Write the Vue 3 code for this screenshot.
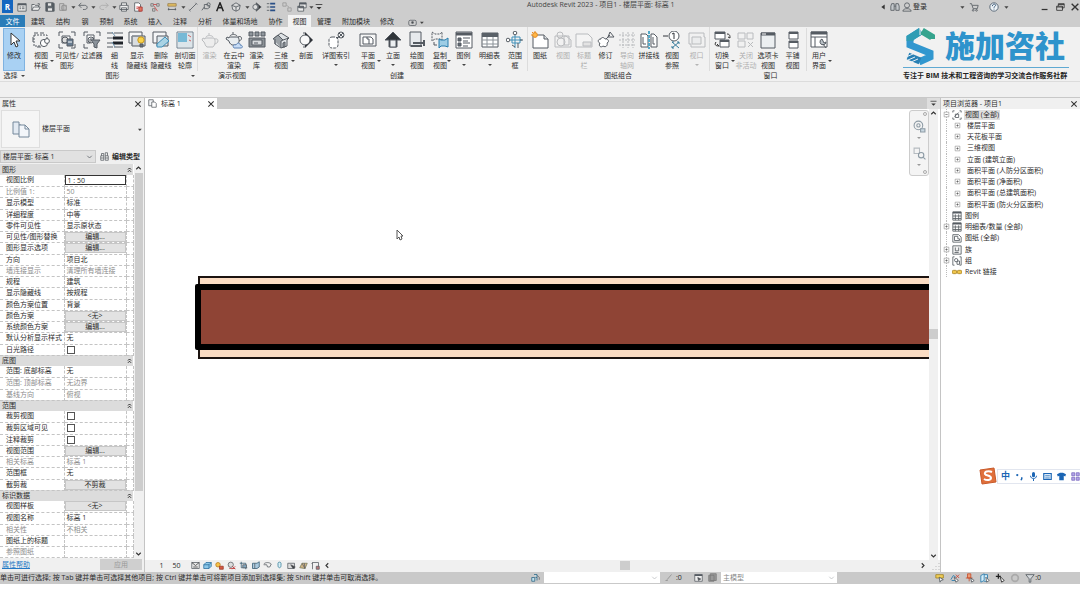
<script setup>
import { h, ref } from 'vue'

const K = '#555b62'
const B = '#3f8fb8'

const large = {
  thumb: `<path d="M1 2h6v3h2v9H1z" fill="#e3eaf2" stroke="#75889b"/><path d="M7 5h6l4 4v8H7z" fill="#f3f6fa" stroke="#75889b"/><path d="M13 5v4h4" stroke="#75889b"/>`,
  cursor: `<path d="M6 2v12l3-3 2 5 2-1-2-5h4z" fill="#fff" stroke="#333"/>`,
  template: `<path d="M2 4h13v5M2 4v11h6" stroke-dasharray="2 1"/><path d="M2 2h4M8 2h4M1 6v5" /><circle cx="12" cy="12" r="3.6" fill="#fff"/><circle cx="15" cy="10" r="2.4" fill="#fff"/><path d="M5 16h4"/>`,
  visibility: `<path d="M1 5V1h4M13 1h4v4M1 13v4h4M13 17h4v-4"/><path d="M4 5h8v7H4z" fill="#fff"/><circle cx="7" cy="9" r="3" fill="#ddd"/><path d="M9 8h6v7H9z" fill="#687c90"/><path d="M10 11h4" stroke="#fff"/>`,
  filter: `<path d="M1 5V1h4M13 1h4v4M1 13v4h4"/><path d="M4 4h7v4H7v4H4z" fill="#fff"/><circle cx="8" cy="9" r="3" /><path d="M8 9h9l-3 4v4l-3-1v-3z" fill="#8b939b"/>`,
  thin: `<path d="M1 2h6M1 7h6M1 12h6M1 16h6" stroke-width="1"/><path d="M8 2h9M8 16h9" stroke-width="1"/><path d="M7 7h10M7 12h10" stroke-width="3" stroke="#20242a"/><path d="M6 1l3 4M6 11l3 5" stroke="#6f93ad"/>`,
  showHidden: `<path d="M1 1h13v11H1z" fill="#f5f6f7"/><path d="M4 5h13v10H4z" fill="#d9dde0"/><path d="M4 15V5h10" stroke="#8a9299"/><circle cx="13" cy="9" r="3.2" fill="#f9d24a" stroke="#c7971f"/><path d="M12 13h3v3h-3z" fill="#69737c"/>`,
  hideHidden: `<path d="M1 1h13v11H1z" fill="#f5f6f7"/><path d="M5 5h11v10H5z" fill="#dfe8ed"/><path d="M5 13L13 6l4 4-7 6H5z" fill="#a9d3e4" stroke="${B}"/>`,
  profile: `<path d="M1 1h16v16H1z" fill="#fff" stroke="#6d7f8d"/><path d="M2 2h9v9H2z" fill="#77b9d6" stroke="none"/><path d="M11 2h5v14H2v-5h9z" fill="#dce5ea" stroke="none"/><path d="M12 4l3 2M13 9l2 1" stroke="#c66"/>`,
  teapot: `<path d="M4 7h9c2 3 1 7-1 9H6c-2-1-2-4-3-5L1 9l1-2 2 1zM5 6c1-2 6-2 7 0M8 4V2M14 8c4-1 4 4 0 5" fill="#e8e8e8"/>`,
  cloudRender: `<path d="M4 6h9c2 3 1 6-1 8H7c-2-1-3-3-3-4L1 8l1-2 2 1z" fill="#e9edf0"/><path d="M5 5c1-2 6-2 7 0M8 3V1M13 6c4-2 5 3 1 4"/><path d="M9 17c-2-2 0-4 2-3 1-3 5-2 4 0 3 0 3 3 1 3z" fill="#c7dcf5" stroke="#5f84b5"/>`,
  gallery: `<path d="M1 1h4v4H1zM7 1h4v4H7zM13 1h4v4h-4z" fill="#8f969c"/><path d="M1 7h16v9H1z" fill="#8c9297"/><path d="M4 9h10v5H4z" fill="#d7dadd"/><path d="M6 12h4"/>`,
  house: `<path d="M1 8l8-6 8 5-2 2v6l-6 2-6-4V8z" fill="#dfe3e6"/><path d="M1 8l5-4 5 5-2 1v7M3 8v5M11 9l6-2M11 12v4h2v-5z" fill="#9ba1a6"/>`,
  section: `<circle cx="8" cy="9" r="5" fill="#f9f9f9"/><path d="M8 1l8 8-8 8v-3a5 5 0 0 0 0-10z" fill="#30343a" stroke="none"/><path d="M7 1v2M7 15v2"/>`,
  callout: `<rect x="2" y="6" width="9" height="11" rx="3" fill="#fff" stroke-dasharray="3 1"/><circle cx="14" cy="4" r="3"/><path d="M12 6l4-4M12 2l4 4M9 7l3-1"/>`,
  plan: `<path d="M1 3h16v12H1z" fill="#f6f6f6"/><path d="M4 6h4v2h2v5H4zM8 6h4l2 2v5h-4" fill="#fff"/>`,
  elevation: `<path d="M9 1l8 8h-4v7H5V9H1z" fill="#30353a"/><path d="M6 9h6v7H6z" fill="#eceff1"/>`,
  drafting: `<path d="M2 1h11v14H2z" fill="#e7eaed"/><path d="M5 12h11M16 9v6M3 15h11" stroke-width="2"/>`,
  duplicate: `<path d="M1 1l3 2h5l2-2v8l-2-1H4l-3 2z" stroke-dasharray="2 1"/><path d="M8 8l2 1h4l3-2v9l-3-1h-4l-2 2z" fill="#9dcde5" stroke="#287dac"/><path d="M3 11v3h3"/>`,
  legend: `<path d="M1 1h16v16H1z" fill="#fff"/><path d="M1 3h16" stroke-width="3"/><path d="M3 7h3v3H3zM3 12h3v3H3z" fill="#626b73"/><path d="M8 7h7M8 10h5M8 12h7M8 15h5"/>`,
  schedule: `<path d="M1 2h16v14H1z" fill="#fff"/><path d="M1 4h16" stroke-width="4" stroke="#5b6269"/><path d="M1 9h16M1 13h16M6 6v10M12 6v10" stroke="#8b9298"/>`,
  scope: `<path d="M9 4v13M4 9h12M6 6h8v6H6z" stroke="${B}"/><circle cx="9" cy="2" r="1.8" fill="#fff"/><circle cx="2" cy="9" r="1.8" fill="#fff"/><path d="M12 12v5M14 9h3M6 14l3 2"/>`,
  sheet: `<path d="M2 4h11l4 4v9H2z" fill="#fff"/><path d="M13 4v4h4" fill="#dfe3e6"/><circle cx="4" cy="4" r="2.4" fill="#ffb848" stroke="#e48b24"/><path d="M4 0v2M0 4h1M1 1l1 1" stroke="#e48b24"/>`,
  placeView: `<path d="M1 5h11l5 4v7H1z"/><circle cx="6" cy="4" r="3"/><circle cx="7" cy="11" r="4"/><path d="M10 5h5v9h-5z"/>`,
  titleBlock: `<path d="M1 3h12l4 4v9H1z" fill="#fafafa"/><path d="M8 11h8v4H8z" fill="#ccc"/>`,
  revision: `<path d="M4 8c-4 0-3 4-1 4-2 3 1 5 3 3 3 2 5-1 4-3 3-1 1-5-2-4-1-2-4-2-4 0z" fill="#fff"/><path d="M9 8l4-4M13 1l4 5h-6z"/>`,
  guide: `<path d="M5 1v16M10 1v16M15 1v16M1 4h16M1 9h16M1 14h16" stroke-dasharray="2 1"/>`,
  matchline: `<path d="M1 3h5l2 2v11H1zM11 3h3l3 3v10h-6z" fill="#fff"/><path d="M9 0v18" stroke="#54a9c8" stroke-width="2" stroke-dasharray="3 1"/><path d="M3 6v7h3M13 6v7h2"/>`,
  viewRef: `<circle cx="11" cy="5" r="5" fill="#fff"/><path d="M0 5h5M9 3l2-1v6" stroke="#30353a"/><path d="M9 11l7 6M16 11l-7 6M9 11h2M14 11h2v2M9 15v2h2" stroke="#397c9c"/>`,
  viewport: `<path d="M1 2h15v4h1v10H3v-3H1z"/><path d="M4 6h9v7H4z" fill="#e1e4e6"/>`,
  switchWin: `<path d="M2 1h10v7H2zM7 9h9v7H7z" fill="#fff"/><path d="M2 2h10M7 10h9" stroke-width="2"/><path d="M14 3c3 0 3 2 3 4l-2-1M3 11c-2 3 0 4 3 4l-2-2" stroke="#333"/>`,
  closeWin: `<path d="M1 2h7v6H1zM10 2h6v6h-6zM1 10h7v6H1zM11 11l5 5M16 11l-5 5"/>`,
  tabView: `<path d="M2 2h14v15H2z" fill="#eceff1"/><path d="M2 3h14" stroke-width="3"/><path d="M3 3h4" stroke="#fff"/>`,
  tile: `<path d="M5 1h9v7H5zM5 10h9v7H5z" fill="#fff"/><path d="M5 2h9M5 11h9" stroke-width="2"/>`,
  ui: `<path d="M1 1h16v15H1z" fill="#fff"/><path d="M1 2h16" stroke-width="3"/><path d="M1 6h16M5 6v10" /><path d="M12 8a3 3 0 1 0 4 3l-2 1-1-2zM13 13l3 4" fill="#b9c0c6"/>`
}

const small = {
  home: `<path d="M1 2h10v9H1z" fill="#e8e8e8"/><path d="M1 3h10" stroke-width="2"/><path d="M3 6h2M6 6h3M3 8h2M6 8h3"/>`,
  open: `<path d="M1 10V3h3l1 1h4v2M1 10l2-4h8l-2 4z" fill="#eee"/><path d="M8 2h2v2"/>`,
  save: `<path d="M1 1h9l1 1v9H1z" fill="#555c63"/><path d="M3 1h5v4H3zM3 7h6v4H3z" fill="#e8e8e8"/>`,
  sync: `<path d="M2 2h5v8H2zM5 4h5v6H5z" stroke="#8b8b8b"/><circle cx="7" cy="7" r="3" stroke="#999"/>`,
  undo: `<path d="M4 1L1 4l3 3M1 4h7c4 0 4 5 0 5H6"/>`,
  redo: `<path d="M8 1l3 3-3 3M11 4H4C0 4 0 9 4 9h2" stroke="#aaa"/>`,
  print: `<path d="M3 4V1h6v3M1 4h10v5H1zM3 7h6v4H3z" fill="#eee"/>`,
  pdf: `<path d="M2 1h5l2 2v8H2z" fill="#fff"/><path d="M4 6h3M4 8h2" stroke="#c33"/><path d="M7 6h4v5H7z" fill="#e1765f" stroke="#a33"/>`,
  measure: `<path d="M1 2h3v3H1zM8 2h3v3H8zM3 8h3v3H3z" stroke="#777"/><path d="M4 3h4M5 5l4 6" stroke="#c44"/>`,
  dim: `<path d="M1 2h10v3H1z" fill="#e3bf62" stroke="#9a8150"/><path d="M1 9h10M2 7v3M10 7v3"/>`,
  line: `<path d="M2 10L10 2M1 9l2 2M9 1l2 2"/>`,
  tag: `<path d="M1 10l3-4M4 3h4l3 3-3 2H4z"/><circle cx="9" cy="3" r="2"/>`,
  text: `<path d="M2 11L6 1l4 10M4 7h4" stroke="#222" stroke-width="1.8"/>`,
  cube: `<path d="M1 4l5-3 5 3-1 5-4 2-4-2zM1 4l5 2 5-2M6 6v5" fill="#ddd"/>`,
  sect: `<path d="M5 1l6 5-6 5V9a3 3 0 0 0 0-6z" fill="#333"/><circle cx="4" cy="6" r="3" fill="#ddd"/>`,
  lines: `<path d="M1 2h3M1 6h3M1 10h3"/><path d="M5 2h6M5 6h6M5 10h6" stroke="#294f87" stroke-width="2"/>`,
  closeInactive: `<path d="M1 1h4v4H1zM7 7h4v4H7zM6 4l2 2" stroke="#999"/>`,
  windows: `<path d="M3 1h8v6H3zM1 5h7v6H1z" fill="#eee"/><path d="M3 2h8M1 6h7" stroke-width="2"/>`,
  more: `<path d="M2 3h8" stroke="#333"/><path d="M3 6h6L6 9z" fill="#333" stroke="none"/>`,
  down: `<path d="M4 5h5L6.500 8z" fill="#444" stroke="none"/>`,
  left: `<path d="M8 3v6L4 6z" fill="#333" stroke="none"/>`,
  chev: `<path d="M3 5l3 3 3-3"/>`,
  chevUp: `<path d="M3 7l3-3 3 3" stroke="#333" stroke-width="1.500"/>`,
  chevDown: `<path d="M3 5l3 3 3-3" stroke="#333" stroke-width="1.500"/>`,
  chevRight: `<path d="M5 3l3 3-3 3" stroke="#333" stroke-width="1.500"/>`,
  chevLeft: `<path d="M7 3L4 6l3 3" stroke="#333" stroke-width="1.500"/>`,
  double: `<path d="M4 6l2-2 2 2M4 9l2-2 2 2" stroke="#222" stroke-width="1.300"/>`,
  close: `<path d="M2 2l8 8M10 2l-8 8" stroke="#333" stroke-width="1.600"/>`,
  min: `<path d="M2 9h7" stroke="#333" stroke-width="1.500"/>`,
  restore: `<path d="M4 5V2h7v5H8M2 5h7v5H2z" stroke="#333"/><path d="M2 6h7M4 3h7" stroke="#333"/>`,
  find: `<path d="M2 2h3v8H1V5zM7 2h3l1 3v5H7zM5 5h2" fill="#c4c8cc"/>`,
  user: `<circle cx="6" cy="4" r="3"/><path d="M1 11c0-4 10-4 10 0z"/>`,
  cart: `<path d="M1 2h2l2 6h5l1-4H4"/><circle cx="5" cy="10" r="1"/><circle cx="9" cy="10" r="1"/>`,
  help: `<circle cx="6" cy="6" r="5" fill="#eef3f7" stroke="#456"/><path d="M4 5c0-3 4-3 4-1 0 1-2 1-2 3M6 8v1" stroke="#246"/>`,
  play: `<rect x="1" y="3" width="10" height="7" rx="2"/><path d="M5 5h2v2H5z" fill="#444"/>`,
  pages: `<path d="M1 1h6v8H1z" fill="#f4f6f8"/><path d="M5 4h4l2 2v5H5z" fill="#fff"/>`,
  editType: `<path d="M1 5h4v6H1zM7 5h4v6H7zM2 5V2h3v3M7 5V1h3v4M1 8h4M7 8h4"/>`,
  views: `<path d="M1 3V1h2M9 1h2v2M1 9v2h2M9 11h2V9"/><path d="M3 8l5-5M4 5h4v4H4z"/>`,
  tableIc: `<path d="M1 1h10v10H1z" fill="#fff"/><path d="M1 2h10" stroke-width="2"/><path d="M1 6h10M1 9h10M4 4v7M8 4v7"/>`,
  sheetIc: `<path d="M1 2h7l3 3v6H1z" fill="#fff"/><path d="M3 4h4v3h2v2H3z"/>`,
  family: `<path d="M1 1h10v10H1z" fill="#f3f3f3"/><path d="M4 3v4h4V3M3 9h5"/>`,
  group: `<path d="M1 11V1h2M9 1h2v10H9M1 11h2"/><circle cx="5" cy="5" r="2"/><path d="M6 6h3v4H6z"/>`,
  link: `<rect x="0" y="4" width="6" height="4" rx="2" fill="#f0c64c" stroke="#a98322"/><rect x="6" y="4" width="6" height="4" rx="2" fill="#f0c64c" stroke="#a98322"/>`,
  detail: `<path d="M1 2h10v8H1z" fill="#e8e8e8"/><path d="M1 2l5 4 5-4M3 8h6" stroke="#333"/>`,
  solid: `<path d="M1 5l3-3h7v5l-3 3H1z" fill="#8dc8e9" stroke="#286b9b"/><path d="M1 5h7v5M8 5l3-3" stroke="#286b9b"/>`,
  sun: `<circle cx="4" cy="5" r="3" fill="#f6c24b" stroke="#b67616"/><path d="M6 7h5v4H6z" fill="#d65b43" stroke="#973425"/>`,
  shadow: `<circle cx="5" cy="5" r="3.500" fill="#ddd"/><path d="M3 10h8M7 7l4 4M11 7l-4 4" stroke="#b33"/>`,
  crop: `<path d="M3 1v8h8M1 3h8v8" stroke="#31576f"/><path d="M5 5h5v4H5z" fill="#83a8c0"/>`,
  cropShow: `<path d="M2 3h6l3-2v7L8 10H2z" fill="#a9c9df" stroke="#31576f"/><path d="M5 3v7"/>`,
  glasses: `<path d="M1 4c3-3 8-2 10 0L9 8H6L5 5H1"/>`,
  bulb: `<path d="M4 3c0-2 4-2 4 0v3c0 4-4 4-4 0z" fill="#d8eef5" stroke="#307a96"/>`,
  temp: `<path d="M1 3h9v7H1z" fill="#ddd"/><path d="M5 5l6 3-3 2z" fill="#333"/>`,
  analytic: `<path d="M1 9l3-6h7L8 10z" fill="#d0b487" stroke="#775"/><path d="M4 3l4 7M7 3l1 7"/>`,
  constraint: `<path d="M2 11V2h8M2 2l-1 2M10 2v8" /><path d="M7 7h4v4H7z" fill="#b77"/>`,
  workset: `<path d="M1 6h4v5H1zM4 2h4v4M6 6h2v4" stroke="#286080" fill="#bfe2ef"/><path d="M8 3l3 3v3"/>`,
  editReq: `<path d="M2 10h3M4 9l6-7" stroke="#888"/>`,
  option: `<path d="M1 2h10v9H1z" fill="#eee"/><path d="M1 3h10" stroke-width="2"/><path d="M5 6l4 2-3 2z" fill="#444"/>`,
  optionSet: `<path d="M3 1h8v9H3zM1 3h7v8H1z" fill="#999" stroke="#777"/>`,
  selLink: `<path d="M1 2h9v4H1z" fill="#f0ce57" stroke="#a18427"/><path d="M5 5l5 3-3 1-1 2z" fill="#fff"/>`,
  selUnder: `<path d="M1 8l3-5 3 2M2 9h5" stroke="#277aac"/><path d="M7 2l4 4M11 2L7 6" stroke="#c43"/><path d="M5 5l5 4-3 2z" fill="#fff"/>`,
  selPin: `<path d="M3 1h4v5H3zM1 6h8M5 6v4" stroke="#c64f2e" fill="#ee9c75"/><path d="M7 6l4 3-3 2z" fill="#fff"/>`,
  selFace: `<path d="M1 3l4-2v8l-4 2zM5 2h4v8H5" stroke="#277aac" fill="#d6edf8"/><path d="M7 5l4 4-3 2z" fill="#fff"/>`,
  drag: `<path d="M1 4h6M4 1v6" stroke="#222" stroke-width="1.500"/><path d="M6 4l5 5-3 2z" fill="#fff" stroke="#222"/>`,
  circle: `<circle cx="6" cy="6" r="4" stroke="#aaa" stroke-width="2"/>`,
  funnel: `<path d="M1 2h10L7 7v4H5V7z" fill="#d5d9dd"/>`,
  wheel: `<circle cx="5" cy="5" r="4" stroke="#8d9ba5"/><circle cx="5" cy="5" r="1.500" stroke="#8d9ba5"/><path d="M7 8h4v3H7z" fill="#c9d8e2" stroke="#8d9ba5"/>`,
  zoomRegion: `<path d="M1 1h5v5H1z" stroke="#b5bbc0"/><circle cx="7.500" cy="7.500" r="2.500" stroke="#8d9ba5"/><path d="M9.500 9.500l2 2" stroke="#8d9ba5"/>`,
  expand: `<path d="M2 2h8v8H2z" fill="#fff" stroke="#888"/><path d="M4 6h4M6 4v4" stroke="#444"/>`,
  collapse: `<path d="M2 2h8v8H2z" fill="#fff" stroke="#888"/><path d="M4 6h4" stroke="#444"/>`,
  punct: `<circle cx="3" cy="4" r="1.500" fill="#1b65b4" stroke="none"/><path d="M9 7v2l-1 2" stroke="#1b65b4" stroke-width="2"/>`,
  mic: `<rect x="4" y="0" width="4" height="7" rx="2" fill="#1b65b4" stroke="none"/><path d="M2 5c0 5 8 5 8 0M6 9v3" stroke="#1b65b4" stroke-width="1.300"/>`,
  keyboard: `<path d="M1 2h10v8H1z" fill="#dcecf9" stroke="#1b65b4" stroke-width="1.500"/><path d="M3 5h6M3 8h6" stroke="#1b65b4"/>`,
  shirt: `<path d="M4 1h4l4 2-1 3-2-1v6H3V5L1 6 0 3z" fill="#1b65b4" stroke="none"/>`,
  grid4: `<path d="M1 1h4v4H1zM7 1h4v4H7zM1 7h4v4H1zM7 7h4v4H7z" fill="#b5a5e8" stroke="#7765bd"/>`
}

const make = (set, size, cls) => {
  const Icon = (p) =>
    h('svg', {
      class: cls,
      viewBox: `0 0 ${size} ${size}`,
      fill: 'none',
      stroke: K,
      'stroke-width': 1,
      'aria-hidden': 'true',
      innerHTML: set[p.name]
    })
  Icon.props = ['name']
  return Icon
}
const Big = make(large, 18, 'big')
const Ico = make(small, 12, 'ico')

const quick = ['home', 'open', 'save', 'sync', 'down', 'undo', 'down', 'redo', 'down', 'print', 'pdf', 'measure', 'dim', 'down', 'line', 'tag', 'text', 'cube', 'down', 'sect', 'lines', 'closeInactive', 'windows', 'down', 'more']
const tabs = ['文件', '建筑', '结构', '钢', '预制', '系统', '插入', '注释', '分析', '体量和场地', '协作', '视图', '管理', '附加模块', '修改']

const t = (icon, a, b = '', o = '') => ({ icon, a, b, side: o === 's', below: o === 'b' || o === 'xb', off: o === 'x' || o === 'xb', on: o === 'on' })
const groups = [
  { id: 'select', title: '选择', arrow: true, tools: [t('cursor', '修改', '', 'on')] },
  { id: 'graphics', title: '图形', launcher: true, tools: [t('template', '视图', '样板', 's'), t('visibility', '可见性/', '图形'), t('filter', '过滤器'), t('thin', '细', '线'), t('showHidden', '显示', '隐藏线'), t('hideHidden', '删除', '隐藏线'), t('profile', '剖切面', '轮廓')] },
  { id: 'present', title: '演示视图', tools: [t('teapot', '渲染', '', 'x'), t('cloudRender', '在云中', '渲染'), t('gallery', '渲染', '库')] },
  { id: 'create', title: '创建', tools: [t('house', '三维', '视图', 's'), t('section', '剖面'), t('callout', '详图索引', '', 'b'), t('plan', '平面', '视图', 's'), t('elevation', '立面', '', 'b'), t('drafting', '绘图', '视图'), t('duplicate', '复制', '视图', 's'), t('legend', '图例', '', 'b'), t('schedule', '明细表', '', 'b'), t('scope', '范围', '框')] },
  { id: 'sheets', title: '图纸组合', tools: [t('sheet', '图纸'), t('placeView', '视图', '', 'x'), t('titleBlock', '标题', '栏', 'x'), t('revision', '修订'), t('guide', '导向', '轴网', 'x'), t('matchline', '拼接线'), t('viewRef', '视图', '参照'), t('viewport', '视口', '', 'xb')] },
  { id: 'window', title: '窗口', tools: [t('switchWin', '切换', '窗口', 's'), t('closeWin', '关闭', '非活动', 'x'), t('tabView', '选项卡', '视图'), t('tile', '平铺', '视图'), t('ui', '用户', '界面', 's')] }
]

const rows = [
  ['h', '图形'], ['i', '视图比例', '1 : 50'], ['d', '比例值 1:', '50'], ['t', '显示模型', '标准'], ['t', '详细程度', '中等'], ['t', '零件可见性', '显示原状态'],
  ['b', '可见性/图形替换', '编辑...'], ['b', '图形显示选项', '编辑...'], ['t', '方向', '项目北'], ['d', '墙连接显示', '清理所有墙连接'], ['t', '规程', '建筑'], ['t', '显示隐藏线', '按规程'],
  ['t', '颜色方案位置', '背景'], ['b', '颜色方案', '<无>'], ['b', '系统颜色方案', '编辑...'], ['t', '默认分析显示样式', '无'], ['c', '日光路径'],
  ['h', '底图'], ['t', '范围: 底部标高', '无'], ['d', '范围: 顶部标高', '无边界'], ['d', '基线方向', '俯视'],
  ['h', '范围'], ['c', '裁剪视图'], ['c', '裁剪区域可见'], ['c', '注释裁剪'], ['b', '视图范围', '编辑...'], ['d', '相关标高', '标高 1'], ['t', '范围框', '无'], ['b', '截剪裁', '不剪裁'],
  ['h', '标识数据'], ['b', '视图样板', '<无>'], ['t', '视图名称', '标高 1'], ['d', '相关性', '不相关'], ['t', '图纸上的标题', ''], ['d', '参照图纸', '']
].map(([kind, label, value]) => ({ kind, label, value }))

const tree = [
  { l: 0, e: 'collapse', i: 'views', n: '视图 (全部)', sel: true },
  ...['楼层平面', '天花板平面', '三维视图', '立面 (建筑立面)', '面积平面 (人防分区面积)', '面积平面 (净面积)', '面积平面 (总建筑面积)', '面积平面 (防火分区面积)'].map((n) => ({ l: 1, e: 'expand', n })),
  { l: 0, i: 'tableIc', n: '图例' },
  { l: 0, e: 'expand', i: 'tableIc', n: '明细表/数量 (全部)' },
  { l: 0, i: 'sheetIc', n: '图纸 (全部)' },
  { l: 0, e: 'expand', i: 'family', n: '族' },
  { l: 0, e: 'expand', i: 'group', n: '组' },
  { l: 0, i: 'link', n: 'Revit 链接' }
]
const viewIcons = ['detail', 'solid', 'sun', 'shadow', 'crop', 'cropShow', 'glasses', 'bulb', 'temp', 'analytic', 'constraint', 'chevLeft']
const selIcons = ['selLink', 'selUnder', 'selPin', 'selFace', 'drag', 'circle', 'funnel']
const scale = ref('1 : 50')
</script>

<template>
  <div class="app">
    <header class="titlebar">
      <div class="quick">
        <button class="logo" aria-label="R"><b>R</b></button>
        <button v-for="(q, i) in quick" :key="i" :aria-label="q"><Ico :name="q" /></button>
      </div>
      <h1>Autodesk Revit 2023 - 项目1 - 楼层平面: 标高 1</h1>
      <div class="account">
        <button aria-label="left"><Ico name="left" /></button>
        <button aria-label="find"><Ico name="find" /></button>
        <button class="login"><Ico name="user" />登录</button>
        <button aria-label="account menu"><Ico name="down" /></button>
        <button class="cart" aria-label="cart"><Ico name="cart" /></button>
        <button aria-label="help"><Ico name="help" /></button>
        <button aria-label="help menu"><Ico name="down" /></button>
      </div>
      <div class="winctl">
        <button aria-label="minimize"><Ico name="min" /></button>
        <button aria-label="restore"><Ico name="restore" /></button>
        <button aria-label="close"><Ico name="close" /></button>
      </div>
    </header>

    <nav class="tabs">
      <button v-for="n in tabs" :key="n" :class="{ file: n === '文件', active: n === '视图' }">{{ n }}</button>
      <button aria-label="panel"><Ico name="play" /><Ico name="down" /></button>
    </nav>

    <section class="ribbon">
      <div v-for="g in groups" :key="g.id" class="group" :class="g.id">
        <div class="tools">
          <button v-for="(x, i) in g.tools" :key="i" class="tool" :class="{ off: x.off, on: x.on }">
            <Big :name="x.icon" />
            <span>{{ x.a }}</span>
            <span v-if="x.b">{{ x.b }}</span>
            <i v-if="x.below" class="tri"></i>
            <i v-if="x.side" class="tri side"></i>
          </button>
        </div>
        <div class="gtitle">{{ g.title }}<i v-if="g.arrow" class="tri"></i><i v-if="g.launcher" class="tri launch"></i></div>
      </div>
      <div class="brand">
        <div class="brandtop">
          <svg class="mark" viewBox="0 0 30 37" fill="none" stroke-width="7">
            <path d="M16 3L5 10v7l20 8v4l-11 5" stroke="#3197cf" />
            <path d="M16 3L5 10v3" stroke="#2f9db4" />
            <path d="M17 3l10 6v2" stroke="#35a48e" />
            <path d="M15 33L3 28" stroke="#2880b4" />
            <path d="M15 0v7" stroke="#f1f1f1" stroke-width="1" />
            <path d="M1 29l7-3M3 32l7-3M6 34l7-3" stroke="#e6eef4" stroke-width="1" />
          </svg>
          <strong>施加咨社</strong>
        </div>
        <p>专注于 BIM 技术和工程咨询的学习交流合作服务社群</p>
      </div>
    </section>
    <div class="options"></div>

    <main class="work">
      <aside class="props">
        <div class="phead"><span>属性</span><button aria-label="close"><Ico name="close" /></button></div>
        <div class="type">
          <div class="thumb"><Big name="thumb" /></div>
          <span>楼层平面</span>
          <button aria-label="types"><Ico name="down" /></button>
        </div>
        <div class="inst">
          <div class="selwrap"><select aria-label="view"><option>楼层平面: 标高 1</option></select><Ico name="chev" /></div>
          <button><Ico name="editType" />编辑类型</button>
        </div>
        <div class="pbody">
          <table>
            <colgroup><col class="c1" /><col class="c2" /><col class="c3" /></colgroup>
            <tbody>
              <tr v-for="(r, i) in rows" :key="i" :class="r.kind">
                <template v-if="r.kind === 'h'">
                  <th colspan="2">{{ r.label }}</th>
                  <th><Ico name="double" /></th>
                </template>
                <template v-else>
                  <td><label :for="'p' + i">{{ r.label }}</label></td>
                  <td>
                    <input v-if="r.kind === 'i'" :id="'p' + i" v-model="scale" class="scale" />
                    <input v-else-if="r.kind === 'c'" :id="'p' + i" type="checkbox" />
                    <button v-else-if="r.kind === 'b'" :id="'p' + i">{{ r.value }}</button>
                    <output v-else :id="'p' + i">{{ r.value }}</output>
                  </td>
                  <td></td>
                </template>
              </tr>
            </tbody>
          </table>
          <div class="vscroll"><Ico name="chevUp" /><div class="bar"></div><Ico name="chevDown" /></div>
        </div>
        <div class="pfoot"><a href="#">属性帮助</a><button disabled>应用</button></div>
      </aside>

      <section class="view">
        <div class="viewtabs">
          <div class="vtab"><Ico name="pages" /><span>标高 1</span><button aria-label="close"><Ico name="close" /></button></div>
          <button class="vmenu" aria-label="views"><Ico name="more" /></button>
        </div>
        <div class="stage">
          <div class="canvas">
            <div class="finish"></div>
            <div class="core"></div>
            <svg class="pointer" viewBox="0 0 8 12"><path d="M1 1v9l2-2 1 3 2-1-1-3h2z" fill="#fff" stroke="#555" stroke-width="1" /></svg>
            <div class="navbar">
              <i class="dot"></i>
              <Ico name="wheel" /><i class="tri"></i>
              <hr />
              <Ico name="zoomRegion" /><i class="tri"></i>
              <i class="dot"></i>
            </div>
          </div>
          <div class="vscroll wide"><Ico name="chevUp" /><div class="knob"></div><Ico name="chevDown" /></div>
        </div>
        <div class="viewbar">
          <span class="num">1</span><span class="num">50</span>
          <button v-for="v in viewIcons" :key="v" :aria-label="v"><Ico :name="v" /></button>
          <div class="hscroll"><div class="knob"></div></div>
          <Ico name="chevRight" />
          <svg class="grip" viewBox="0 0 10 10"><path d="M9 2v1M9 5v1M9 8v1M6 5v1M6 8v1M3 8v1" stroke="#bbb" /></svg>
        </div>
      </section>

      <aside class="browser">
        <div class="phead"><span>项目浏览器 - 项目1</span><button aria-label="close"><Ico name="close" /></button></div>
        <ul>
          <li v-for="(n, i) in tree" :key="i" :class="{ sub: n.l, sel: n.sel }">
            <Ico v-if="n.e" :name="n.e" class="exp" /><i v-else class="exp"></i>
            <Ico v-if="n.i" :name="n.i" class="node" />
            <span>{{ n.n }}</span>
          </li>
        </ul>
      </aside>
    </main>

    <footer class="status">
      <span class="hint">单击可进行选择; 按 Tab 键并单击可选择其他项目; 按 Ctrl 键并单击可将新项目添加到选择集; 按 Shift 键并单击可取消选择。</span>
      <Ico name="workset" />
      <div class="selwrap ws"><select aria-label="workset"><option></option></select><Ico name="chev" /></div>
      <div class="req"><Ico name="editReq" /><span>:0</span></div>
      <div class="opts"><Ico name="option" /><Ico name="optionSet" /></div>
      <div class="selwrap ws"><select aria-label="design option"><option>主模型</option></select><Ico name="chev" /></div>
      <div class="selection"><button v-for="s in selIcons" :key="s" :aria-label="s"><Ico :name="s" /></button><span>:0</span></div>
    </footer>

    <div class="ime">
      <svg class="sogou" viewBox="0 0 18 18"><path d="M1 3l14-2 2 14-14 2z" fill="#e0703c" stroke="#c85a2a" /><path d="M13 5C9 3 5 5 6 7c1 2 6 1 6 4 0 2-4 3-7 1" fill="none" stroke="#fff" stroke-width="2" /></svg>
      <div class="imebar">
        <b>中</b><Ico name="punct" /><Ico name="mic" /><Ico name="keyboard" /><Ico name="shirt" /><Ico name="grid4" />
      </div>
    </div>
  </div>
</template>

<style>
body { background: #fff; }
</style>

<style scoped>
* { box-sizing: border-box; }
.app { position: relative; font: 7px/10px "Open Sans", "Noto Sans CJK SC", sans-serif; color: #2b2b2b; overflow: hidden; }
button, input, select { font: inherit; color: inherit; border: 0; background: none; padding: 0; margin: 0; border-radius: 0; }
button { display: flex; align-items: center; justify-content: center; white-space: nowrap; }
.ico { display: block; width: 9px; height: 9px; flex: none; }
.big { display: block; width: 18px; height: 18px; flex: none; }
.tri { display: block; width: 0; height: 0; border: 2px solid transparent; border-top-color: #444; border-bottom: 0; }

.titlebar { height: 15px; background: #cdcdcd; display: flex; align-items: start; }
.quick { display: grid; height: 13px; width: 527px; flex: none; align-items: center; justify-items: center; grid-template-columns: 15px 13px 15px 14px 12px 8px 12px 8px 13px 8px 12px 16px 18px 15px 7px 13px 13px 16px 15px 8px 12px 15px 17px 13px 5px 12px; }
.quick .ico { width: 10px; height: 10px; }
.logo { width: 11px; height: 13px; background: #1566c0; color: #fff; font-size: 8px; justify-self: start; margin-left: 2px; }
h1 { font: inherit; margin: 0; white-space: nowrap; color: #444; }
.account { margin-left: auto; display: flex; align-items: center; height: 13px; gap: 2px; margin-right: 29px; }
.account .ico, .winctl .ico { width: 10px; height: 10px; }
.login { gap: 1px; margin-right: 28px; }
.cart { margin-right: 8px; }
.winctl { display: flex; gap: 5px; height: 13px; align-items: center; }

.tabs { height: 12px; background: #cdcdcd; display: grid; grid-template-columns: 25px 26px 24px 20px 23px 25px 24px 26px 24px 46px 25px 23px 26px 38px 24px 36px; }
.tabs button { padding-top: 2px; }
.tabs .file { background: #2a7cb8; color: #fff; }
.tabs .active { background: #f3f3f3; }

.ribbon { height: 55px; background: #f1f1f1; border-bottom: 1px solid #dcdcdc; display: flex; }
.group { display: flex; flex-direction: column; flex: none; }
.tools { display: grid; height: 44px; padding-top: 1px; }
.tool { flex-direction: column; justify-content: flex-start; position: relative; padding-top: 3px; min-width: 0; }
.tool .big { margin-bottom: 2px; }
.tool .tri { margin-top: 3px; }
.tool .side { position: absolute; right: 0; top: 29px; }
.tool.off { opacity: 0.35; }
.tool.on { background: #a9d1f3; border: 1px solid #7fb2e0; padding-top: 2px; }
.gtitle { display: flex; align-items: center; justify-content: center; gap: 3px; position: relative; white-space: nowrap; }
.launch { position: absolute; right: 2px; }
.select .tools { grid-template-columns: 22px; padding-left: 3px; }
.select { width: 28px; }
.graphics .tools { grid-template-columns: 26px 26px 24px 21px 24px 24px 24px; }
.present .tools { grid-template-columns: 25px 24px 21px; }
.create .tools { grid-template-columns: 28px 22px 38px 26px 24px 24px 22px 25px 27px 24px; }
.sheets .tools { grid-template-columns: 26px 20px 22px 21px 22px 22px 24px 25px; }
.window .tools { grid-template-columns: 26px 22px 22px 27px 26px; }
.graphics .tools, .create .tools, .sheets .tools, .window .tool:nth-child(4) { box-shadow: 1px 0 #dcdcdc; }
.brand { margin-left: auto; margin-right: 11px; width: 166px; }
.brandtop { display: flex; justify-content: space-between; align-items: center; height: 41px; padding: 0 4px 2px 2px; border-bottom: 1px solid #5fa9d2; }
.mark { width: 30px; height: 37px; }
.brand strong { font-size: 30px; line-height: 36px; color: #2e93cc; font-weight: 900; }
.brand p { margin: 3px 0 0; font-weight: 700; color: #222; white-space: nowrap; }
.options { height: 15px; background: #f0f0f0; }

.work { display: flex; border-top: 1px solid #c8c8c8; }
.props { width: 145px; flex: none; background: #f0f0f0; border-right: 1px solid #c4c4c4; }
.phead { height: 11px; display: flex; align-items: center; justify-content: space-between; padding: 0 2px; background: #f0f0f0; }
.phead .ico { width: 8px; height: 8px; }
.type { height: 40px; display: flex; align-items: center; gap: 2px; }
.thumb { width: 39px; height: 38px; border: 1px solid #dedede; background: #f5f5f5; display: flex; align-items: center; justify-content: center; margin-left: 1px; }
.type button { margin-left: auto; }
.inst { height: 15px; display: flex; align-items: center; }
.inst button { flex: 1; gap: 3px; font-weight: 600; }
.selwrap { position: relative; display: flex; align-items: center; }
.selwrap select { appearance: none; width: 100%; padding-left: 2px; outline: 0; }
.selwrap .ico { position: absolute; right: 1px; pointer-events: none; }
.inst .selwrap { width: 96px; height: 13px; background: #e1e1e1; border: 1px solid #c9c9c9; }
.pbody { display: flex; }
table { border-collapse: collapse; table-layout: fixed; width: 133px; background: #fff; }
.c1 { width: 64px; }
.c2 { width: 62px; }
.c3 { width: 7px; }
tr { height: 11px; }
tr:nth-child(4n) { height: 12px; }
td, th { padding: 0; line-height: 10px; border-bottom: 1px dashed #c4c4c4; border-right: 1px dashed #c4c4c4; white-space: nowrap; overflow: hidden; text-align: left; vertical-align: middle; }
td:first-child { padding-left: 6px; }
th { font-weight: 400; background: #dcdcdc; border: 0; padding-left: 2px; overflow: visible; }
th .ico { margin-left: -3px; }
td output { padding-left: 2px; display: block; }
.d { color: #8c8c8c; }
label { display: block; }
td button { width: 100%; height: 10px; background: #e2e2e2; border: 1px solid #c6c6c6; line-height: 8px; }
.scale { display: block; width: 100%; height: 10px; border: 1px solid #333; padding-left: 2px; line-height: 8px; }
input[type='checkbox'] { appearance: none; display: block; width: 8px; height: 8px; border: 1px solid #555; margin-left: 2px; background: #fff; }
.vscroll { flex: 1; background: #f0f0f0; display: flex; flex-direction: column; align-items: center; justify-content: space-between; }
.bar { width: 8px; flex: 1; background: #cdcdcd; margin-bottom: 58px; }
.pfoot { height: 14px; display: flex; align-items: center; justify-content: space-between; padding: 0 2px; }
a { color: #2478c4; text-decoration: underline; }
.pfoot button { width: 42px; height: 11px; background: #cfcfcf; color: #999; }

.view { flex: 1; min-width: 0; display: flex; flex-direction: column; background: #fff; }
.viewtabs { height: 11px; background: #cbcbcb; display: flex; justify-content: space-between; }
.vtab { width: 72px; background: #fff; display: flex; align-items: center; gap: 4px; padding: 0 2px 0 3px; }
.vtab button { margin-left: auto; }
.vtab button .ico { width: 8px; height: 8px; }
.vmenu { width: 13px; background: #dedede; }
.stage { flex: 1; display: flex; padding-right: 2px; }
.canvas { flex: 1; position: relative; overflow: hidden; }
.finish { position: absolute; left: 53px; right: -4px; top: 167px; height: 83px; border: 2px solid #1c1310; background: #fbdcc3; }
.core { position: absolute; left: 50px; right: -8px; top: 175px; height: 66px; border: 6px solid #000; border-radius: 2px; background: #8f4435; }
.pointer { position: absolute; left: 251px; top: 120px; width: 8px; height: 12px; }
.navbar { position: absolute; right: 0; top: 1px; width: 20px; height: 66px; border: 1px solid #ccc; border-radius: 3px; background: #f4f4f4; display: flex; flex-direction: column; align-items: center; gap: 4px; padding: 1px; }
.navbar .ico { width: 13px; height: 13px; }
.navbar hr { width: 14px; height: 1px; border: 0; background: #ddd; margin: 0; }
.navbar .tri { border-top-color: #999; }
.dot { width: 4px; height: 4px; border: 1px solid #aaa; border-radius: 2px; align-self: flex-end; flex: none; }
.wide { flex: none; width: 9px; }
.wide .knob { height: 10px; width: 9px; }
.knob { width: 10px; height: 9px; background: #cdcdcd; }
.viewbar { height: 12px; background: #f0f0f0; display: flex; align-items: center; gap: 3px; padding-left: 11px; }
.num { width: 11px; text-align: center; }
.num + .num { margin-left: 1px; margin-right: 6px; }
.hscroll { flex: 1; display: flex; justify-content: center; }
.grip { width: 10px; height: 10px; }

.browser { width: 140px; flex: none; border-left: 1px solid #c4c4c4; background: #fff; }
ul { list-style: none; margin: 0; padding: 0 0 0 2px; }
li { height: 11px; display: flex; align-items: center; gap: 2px; white-space: nowrap; position: relative; }
li:nth-child(4n) { height: 12px; }
li::before { content: ''; position: absolute; left: 3px; top: 0; bottom: 0; border-left: 1px dotted #bbb; }
.exp { width: 7px; height: 7px; flex: none; position: relative; }
.node { width: 10px; height: 10px; }
li .node + span { padding: 0 1px; }
.sub { padding-left: 11px; }
.sub span { margin-left: 4px; }
.sel span { background: #dedede; }

.status { height: 12px; background: #c9c9c9; display: flex; align-items: center; }
.hint { width: 531px; white-space: nowrap; flex: none; overflow: hidden; }
.ws { height: 11px; width: 116px; background: #fff; margin-left: 4px; color: #888; }
.ws .ico { opacity: 0.4; }
.req { display: flex; align-items: center; margin-left: 4px; width: 30px; gap: 3px; }
.opts { display: flex; gap: 5px; }
.selection { margin-left: auto; display: flex; align-items: center; gap: 5px; margin-right: 39px; }
.selection .ico { width: 10px; height: 10px; }
.selection span { margin-left: -5px; }

.ime { position: absolute; right: 0; top: 467px; display: flex; align-items: center; }
.sogou { width: 18px; height: 18px; }
.imebar { display: flex; align-items: center; gap: 5px; width: 83px; height: 15px; padding-left: 3px; background: #fff; border: 1px solid #e2e6ef; border-right: 0; overflow: hidden; }
.imebar b { font-size: 9px; color: #1b65b4; }
</style>
